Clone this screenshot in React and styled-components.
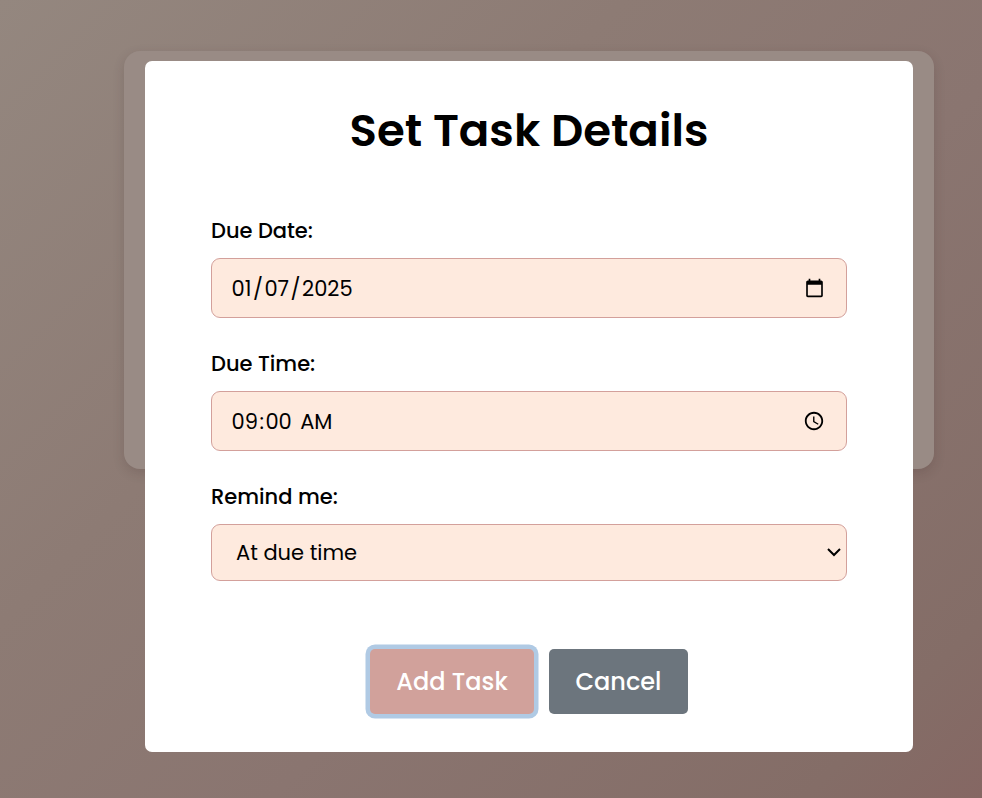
import React from "react";
import styled, { createGlobalStyle, css } from "styled-components";

const GlobalStyle = createGlobalStyle`
  * { box-sizing: border-box; }
  body {
    margin: 0;
    color: #000;
    font-family: Poppins, sans-serif;
  }
`;

const Page = styled.main`
  display: grid;
  height: 798px;
  padding-left: 124px;
  align-content: start;
  overflow: hidden;
  background: linear-gradient(135deg, #94877f 0%, #8d7b74 35%, #8a7570 60%, #846d67 90%, #856763 100%);
`;

const BackCard = styled.section`
  grid-area: 1 / 1;
  width: 810px;
  height: 418px;
  margin-top: 51px;
  border-radius: 16px;
  background: #998b85;
  box-shadow: 0 4px 12px rgba(50, 30, 30, 0.16);
`;

const Modal = styled.form`
  grid-area: 1 / 1;
  position: relative;
  display: flex;
  flex-direction: column;
  width: 768px;
  height: 691px;
  margin: 61px 0 0 21px;
  padding: 38px 66px 0;
  border-radius: 7px;
  background: #fff;
`;

const Title = styled.h1`
  margin: 0 0 55px;
  font-size: 45px;
  font-weight: 600;
  line-height: 64px;
  text-align: center;
  white-space: nowrap;
`;

const Field = styled.div`
  display: flex;
  flex-direction: column;
  margin-bottom: 33px;
`;

const Label = styled.label`
  margin-bottom: 15px;
  font-size: 21px;
  font-weight: 500;
  line-height: 25px;
`;

/* Native controls are zoomed so that their pickers and arrows scale with the text. */
const control = css`
  zoom: 1.5;
  width: 100%;
  margin: 0;
  padding: 0 12px;
  border: 1px solid #d3a09b;
  border-radius: 6px;
  outline: none;
  color: #000;
  background-color: #feeade;
  font-family: inherit;
  font-size: 14px;
`;

const Input = styled.input`
  ${control}
  height: 40px;

  &[type="time"] {
    padding-right: 11.3px;
  }

  &::-webkit-datetime-edit-ampm-field {
    padding-left: 2.7px;
  }
`;

const Select = styled.select`
  ${control}
  height: 38px;
`;

const Actions = styled.div`
  display: flex;
  justify-content: center;
  gap: 15px;
  margin-top: 35px;
`;

const Button = styled.button`
  width: ${(p) => p.$width}px;
  height: 65px;
  padding: 0;
  border: 0;
  border-radius: 5px;
  outline: none;
  color: #fff;
  background: ${(p) => (p.$primary ? "#d1a19b" : "#6c757d")};
  box-shadow: ${(p) => (p.$primary ? "0 0 0 4.5px #b0cae4" : "none")};
  font-family: inherit;
  font-size: 24px;
  font-weight: 500;
`;

export default function App() {
  return (
    <>
      <GlobalStyle />
      <Page>
        <BackCard />
        <Modal>
          <Title>Set Task Details</Title>
          <Field>
            <Label htmlFor="date">Due Date:</Label>
            <Input id="date" type="date" defaultValue="2025-01-07" />
          </Field>
          <Field>
            <Label htmlFor="time">Due Time:</Label>
            <Input id="time" type="time" defaultValue="09:00" />
          </Field>
          <Field>
            <Label htmlFor="reminder">Remind me:</Label>
            <Select id="reminder" defaultValue="due">
              <option value="due">At due time</option>
            </Select>
          </Field>
          <Actions>
            <Button type="button" $primary $width={164}>Add Task</Button>
            <Button type="button" $width={139}>Cancel</Button>
          </Actions>
        </Modal>
      </Page>
    </>
  );
}
